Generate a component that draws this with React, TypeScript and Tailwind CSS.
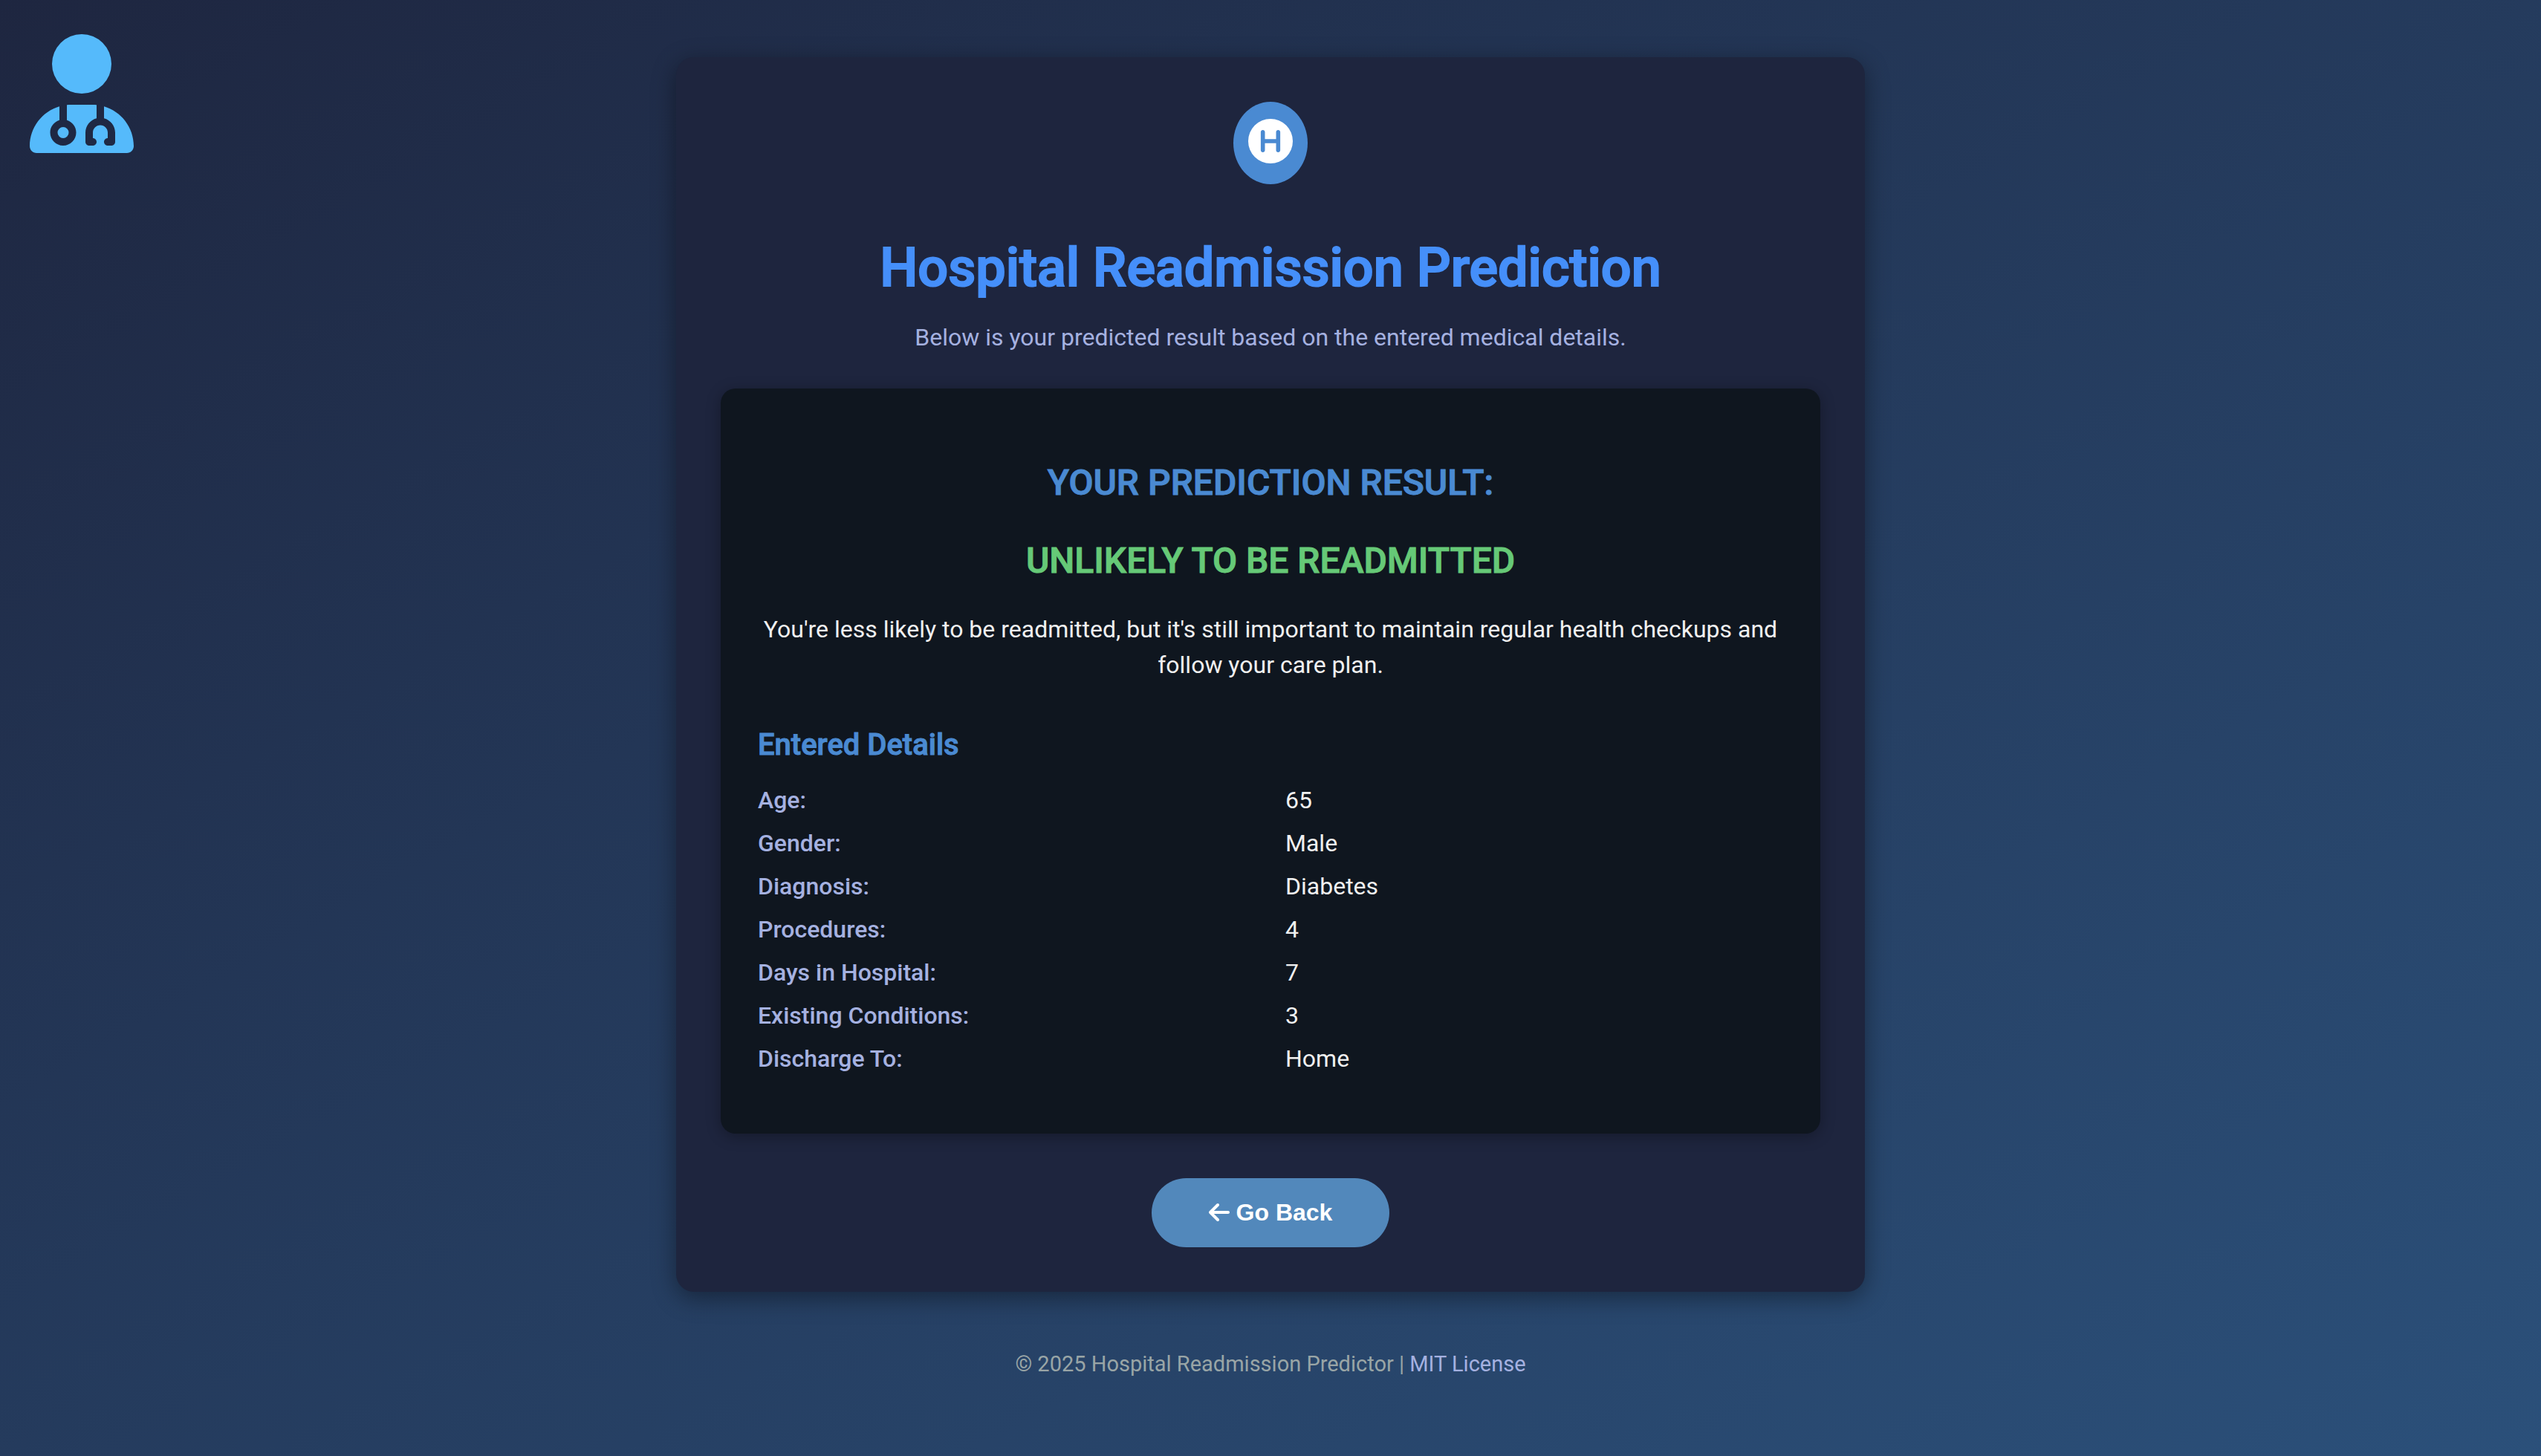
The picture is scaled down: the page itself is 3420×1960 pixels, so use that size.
import { FaArrowLeft, FaCircleH, FaUserDoctor } from "react-icons/fa6";

const details = [
  { label: "Age:", value: "65" },
  { label: "Gender:", value: "Male" },
  { label: "Diagnosis:", value: "Diabetes" },
  { label: "Procedures:", value: "4" },
  { label: "Days in Hospital:", value: "7" },
  { label: "Existing Conditions:", value: "3" },
  { label: "Discharge To:", value: "Home" },
];

export default function App() {
  return (
    <div className="relative flex min-h-screen flex-col items-center bg-linear-to-br/srgb from-[#1e2640] to-[#2b507a] px-10 pt-[77px] font-[Roboto,sans-serif] text-[32px] leading-[48px] text-[#f0f0f0]">
      <FaUserDoctor className="absolute top-[46px] left-[40px] h-[160px] w-[140px] text-[#55bafb]" aria-hidden="true" />

      <main className="flex w-full max-w-[1600px] flex-col items-center rounded-3xl bg-[#1e253e] p-[60px] shadow-[0_8px_32px_rgba(0,0,0,0.4)]">
        <header className="flex flex-col items-center text-center">
          <div className="h-[111px] w-[100px] rounded-[50%] bg-[#4a8ad2] px-5 pt-[23px]">
            <FaCircleH className="size-[60px] text-white" aria-hidden="true" />
          </div>
          <h1 className="mt-[59px] text-[72px] leading-[108px] font-medium text-[#458ffa] [-webkit-text-stroke:2px_#458ffa]">
            Hospital Readmission Prediction
          </h1>
          <p className="mt-[15px] text-[#a5b1e0]">
            Below is your predicted result based on the entered medical details.
          </p>
        </header>

        <section className="mt-[45px] w-full rounded-[20px] bg-[#0f161f] px-[50px] pt-[91px] pb-[77px] shadow-[0_4px_20px_rgba(0,0,0,0.3)]">
          <div className="text-center">
            <h2 className="text-[48px] leading-[72px] font-medium text-[#4a8ad2] [-webkit-text-stroke:1px_#4a8ad2]">
              YOUR PREDICTION RESULT:
            </h2>
            <p className="mt-[33px] text-[48px] leading-[72px] font-medium text-[#66c977] [-webkit-text-stroke:1px_#66c977]">
              UNLIKELY TO BE READMITTED
            </p>
            <p className="mt-[32px]">
              You're less likely to be readmitted, but it's still important to maintain regular
              health checkups and follow your care plan.
            </p>
          </div>

          <h3 className="mt-[54px] text-[40px] leading-[60px] font-medium text-[#4a8ad2] [-webkit-text-stroke:1px_#4a8ad2]">
            Entered Details
          </h3>
          <dl className="mt-5 flex flex-col gap-[10px]">
            {details.map((detail) => (
              <div key={detail.label} className="grid grid-cols-2 gap-10">
                <dt className="font-medium text-[#a5b1e0]">{detail.label}</dt>
                <dd>{detail.value}</dd>
              </div>
            ))}
          </dl>
        </section>

        <button
          type="button"
          className="mt-[60px] flex h-[93px] w-80 items-center justify-center gap-[9px] rounded-full bg-[#5288bb] pb-0.5 font-['Liberation_Sans',sans-serif] font-bold text-white"
        >
          <FaArrowLeft className="h-8 w-7" aria-hidden="true" />
          Go Back
        </button>
      </main>

      <footer className="mt-[75px] text-[29px] leading-[44px] text-[#99a5a6]">
        © 2025 Hospital Readmission Predictor |{" "}
        <a href="#license" className="text-[#a5b1e0]">
          MIT License
        </a>
      </footer>
    </div>
  );
}
